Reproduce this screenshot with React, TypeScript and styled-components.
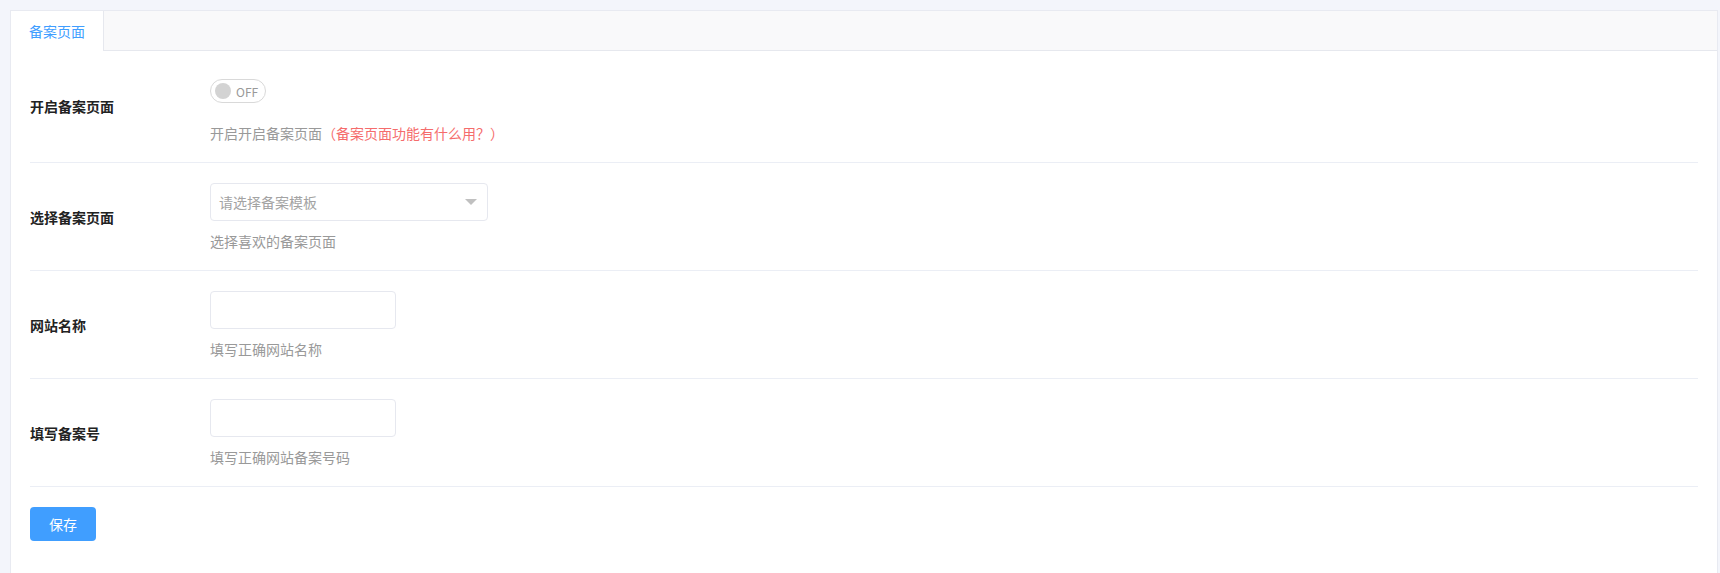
import React from 'react';
import styled, { createGlobalStyle } from 'styled-components';

const GlobalStyle = createGlobalStyle`
  html, body {
    overflow: hidden;
  }
  body {
    margin: 0;
    background: #f3f5fb;
    font-family: "Noto Sans CJK SC", "Microsoft YaHei", sans-serif;
  }
`;

const Page = styled.div`
  padding: 10px 2px 0 10px;
`;

const Card = styled.div`
  background: #ffffff;
  border: 1px solid #e8eaf1;
  min-height: calc(100vh + 20px);
  box-sizing: border-box;
`;

const TabBar = styled.div`
  display: flex;
  height: 39px;
  background: #f9f9fa;
  border-bottom: 1px solid #e6e8ee;
`;

const Tab = styled.div<{ $active?: boolean }>`
  height: 40px;
  margin-bottom: -1px;
  padding: 0 18px;
  display: flex;
  align-items: center;
  font-size: 14px;
  color: ${(p) => (p.$active ? '#409eff' : '#666666')};
  background: ${(p) => (p.$active ? '#ffffff' : 'transparent')};
  border-right: 1px solid #e6e8ee;
  box-sizing: border-box;
`;

const Form = styled.div`
  padding: 4px 19px 0;
`;

const Row = styled.div`
  display: flex;
  align-items: center;
  padding: 20px 0 19px;
  border-bottom: 1px solid #ebeef5;
`;

const Label = styled.div<{ $lift?: number }>`
  width: 180px;
  flex-shrink: 0;
  font-size: 14px;
  font-weight: bold;
  color: #222222;
  margin-top: ${(p) => (p.$lift ? `-${p.$lift}px` : '0')};
`;

const Field = styled.div`
  display: flex;
  flex-direction: column;
`;

const SwitchArea = styled.div`
  height: 38px;
  padding-top: 4px;
  box-sizing: border-box;
`;

const Switch = styled.div`
  width: 56px;
  height: 24px;
  border: 1px solid #d9d9d9;
  border-radius: 12px;
  box-sizing: border-box;
  display: flex;
  align-items: center;
  padding-left: 4px;
`;

const Knob = styled.span`
  width: 16px;
  height: 16px;
  border-radius: 50%;
  background: #d3d3d3;
`;

const SwitchText = styled.span`
  margin-left: 5px;
  font-size: 12px;
  color: #999999;
`;

const Select = styled.div`
  width: 278px;
  height: 38px;
  border: 1px solid #e6e8ef;
  border-radius: 4px;
  box-sizing: border-box;
  display: flex;
  align-items: center;
  justify-content: space-between;
  padding: 0 10px 0 8px;
  font-size: 14px;
  color: #a3a3a3;

  &::after {
    content: '';
    width: 0;
    height: 0;
    border-left: 6px solid transparent;
    border-right: 6px solid transparent;
    border-top: 6px solid #c0c0c0;
  }
`;

const Input = styled.input`
  width: 186px;
  height: 38px;
  border: 1px solid #e6e8ef;
  border-radius: 4px;
  box-sizing: border-box;
  padding: 0 8px;
  font-size: 14px;
  outline: none;
`;

const Help = styled.div`
  margin-top: 10px;
  font-size: 14px;
  line-height: 20px;
  color: #999999;
`;

const Warn = styled.span`
  color: #f56c6c;
`;

const Actions = styled.div`
  padding-top: 20px;
`;

const SaveButton = styled.button`
  width: 66px;
  height: 34px;
  border: none;
  border-radius: 4px;
  background: #409eff;
  color: #ffffff;
  font-size: 14px;
  font-family: inherit;
  padding: 0;
`;

const App: React.FC = () => {
  return (
    <>
      <GlobalStyle />
      <Page>
        <Card>
          <TabBar>
            <Tab $active>备案页面</Tab>
          </TabBar>
          <Form>
            <Row>
              <Label $lift={6}>开启备案页面</Label>
              <Field>
                <SwitchArea>
                  <Switch>
                    <Knob />
                    <SwitchText>OFF</SwitchText>
                  </Switch>
                </SwitchArea>
                <Help>
                  开启开启备案页面<Warn>（备案页面功能有什么用？）</Warn>
                </Help>
              </Field>
            </Row>
            <Row>
              <Label>选择备案页面</Label>
              <Field>
                <Select>请选择备案模板</Select>
                <Help>选择喜欢的备案页面</Help>
              </Field>
            </Row>
            <Row>
              <Label>网站名称</Label>
              <Field>
                <Input type="text" />
                <Help>填写正确网站名称</Help>
              </Field>
            </Row>
            <Row>
              <Label>填写备案号</Label>
              <Field>
                <Input type="text" />
                <Help>填写正确网站备案号码</Help>
              </Field>
            </Row>
            <Actions>
              <SaveButton>保存</SaveButton>
            </Actions>
          </Form>
        </Card>
      </Page>
    </>
  );
};

export default App;
